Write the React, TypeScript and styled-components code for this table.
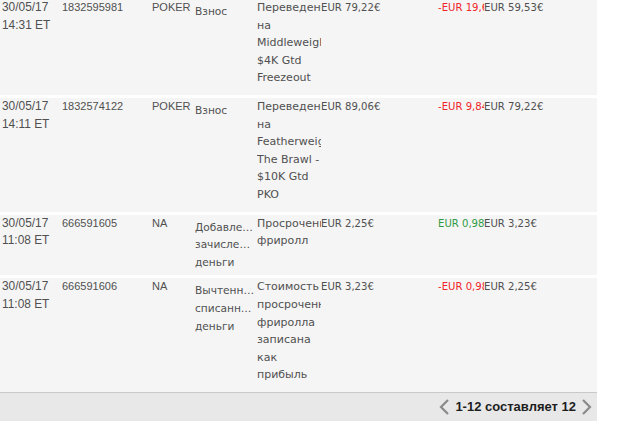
import React from "react";
import styled, { createGlobalStyle } from "styled-components";

type Tone = "plain" | "minus" | "plus";

type Row = {
    date: string;
    time: string;
    id: string;
    product: string;
    kind: string;
    description: string;
    amount: string;
    change: string;
    tone: Tone;
    balance: string;
};

const rows: Row[] = [
    {
        date: "30/05/17",
        time: "14:31 ET",
        id: "1832595981",
        product: "POKER",
        kind: "Взнос",
        description: "Переведено на Middleweight $4K Gtd Freezeout",
        amount: "EUR 79,22€",
        change: "-EUR 19,69€",
        tone: "minus",
        balance: "EUR 59,53€",
    },
    {
        date: "30/05/17",
        time: "14:11 ET",
        id: "1832574122",
        product: "POKER",
        kind: "Взнос",
        description: "Переведено на Featherweight The Brawl - $10K Gtd PKO",
        amount: "EUR 89,06€",
        change: "-EUR 9,84€",
        tone: "minus",
        balance: "EUR 79,22€",
    },
    {
        date: "30/05/17",
        time: "11:08 ET",
        id: "666591605",
        product: "NA",
        kind: "Добавленные зачисленные деньги",
        description: "Просроченный фриролл",
        amount: "EUR 2,25€",
        change: "EUR 0,98€",
        tone: "plus",
        balance: "EUR 3,23€",
    },
    {
        date: "30/05/17",
        time: "11:08 ET",
        id: "666591606",
        product: "NA",
        kind: "Вычтенные списанные деньги",
        description: "Стоимость просроченного фриролла записана как прибыль",
        amount: "EUR 3,23€",
        change: "-EUR 0,98€",
        tone: "minus",
        balance: "EUR 2,25€",
    },
];

const toneColor: Record<Tone, string> = {
    plain: "#505050",
    minus: "#f0262b",
    plus: "#2f9b45",
};

const GlobalStyle = createGlobalStyle`
    html, body {
        margin: 0;
        padding: 0;
        background: #fff;
        overflow: hidden;
    }
    body {
        font-family: "DejaVu Sans", sans-serif;
    }
`;

const StyledPage = styled.div`
    width: 618px;
    height: 433px;
    overflow: hidden;
    background: #fff;
`;

const StyledTable = styled.div`
    width: 597px;
    margin-top: -1px;
    display: flex;
    flex-direction: column;
    gap: 3px;
    background: #fff;
`;

const StyledRow = styled.div`
    display: grid;
    grid-template-columns: 62px 90px 43px 62px 64px 117px 46px 113px;
    background: #f5f5f5;
    color: #505050;
`;

const StyledCell = styled.div`
    padding-bottom: 8px;
    line-height: 17.6px;
    overflow: hidden;
    white-space: nowrap;
    font-family: "Liberation Sans", Arial, sans-serif;
    font-size: 11px;
`;

const StyledDateCell = styled(StyledCell)`
    padding-left: 2px;
    white-space: normal;
    font-size: 11.9px;
`;

const StyledKindCell = styled(StyledCell)`
    padding: 4px 2px 4px 0;
    white-space: normal;
    font-family: "DejaVu Sans", sans-serif;
    font-size: 10.6px;
`;

const StyledWord = styled.span`
    display: block;
    overflow: hidden;
    text-overflow: ellipsis;
    white-space: nowrap;
`;

const StyledTextCell = styled(StyledCell)`
    white-space: normal;
    font-family: "DejaVu Sans", sans-serif;
    font-size: 11px;
`;

const StyledMoneyCell = styled(StyledCell)<{ $tone: Tone }>`
    color: ${(p) => toneColor[p.$tone]};
    font-family: "DejaVu Sans", sans-serif;
    font-size: 10.1px;
`;

const StyledFooter = styled.div`
    width: 597px;
    height: 29px;
    border-top: 1px solid #c9c9c9;
    background: #e8e8e8;
    display: flex;
    align-items: center;
    justify-content: flex-end;
    padding-right: 5px;
    box-sizing: border-box;
    gap: 5px;
`;

const StyledPager = styled.span`
    font-family: "Liberation Sans", Arial, sans-serif;
    font-weight: bold;
    font-size: 13px;
    color: #1e1e1e;
`;

const Chevron = ({ flip }: { flip?: boolean }) => (
    <svg width="11" height="16" viewBox="0 0 11 16">
        <polyline
            points={flip ? "2,1 9,8 2,15" : "9,1 2,8 9,15"}
            fill="none"
            stroke="#8a8a8a"
            strokeWidth="2.2"
        />
    </svg>
);

export default function App() {
    return (
        <StyledPage>
            <GlobalStyle />
            <StyledTable>
                {rows.map((row) => (
                    <StyledRow key={row.id}>
                        <StyledDateCell>
                            {row.date}
                            <br />
                            {row.time}
                        </StyledDateCell>
                        <StyledCell>{row.id}</StyledCell>
                        <StyledCell>{row.product}</StyledCell>
                        <StyledKindCell>
                            {row.kind.split(" ").map((w, i) => (
                                <StyledWord key={i}>{w}</StyledWord>
                            ))}
                        </StyledKindCell>
                        <StyledTextCell>{row.description}</StyledTextCell>
                        <StyledMoneyCell $tone="plain">{row.amount}</StyledMoneyCell>
                        <StyledMoneyCell $tone={row.tone}>{row.change}</StyledMoneyCell>
                        <StyledMoneyCell $tone="plain">{row.balance}</StyledMoneyCell>
                    </StyledRow>
                ))}
            </StyledTable>
            <StyledFooter>
                <Chevron />
                <StyledPager>1-12 составляет 12</StyledPager>
                <Chevron flip />
            </StyledFooter>
        </StyledPage>
    );
}
